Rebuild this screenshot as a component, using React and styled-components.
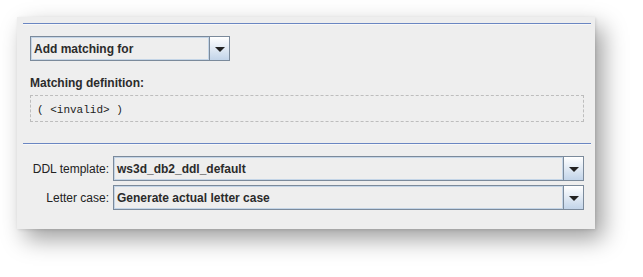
import React from "react";
import styled, { createGlobalStyle } from "styled-components";

const Global = createGlobalStyle`
  html, body { margin: 0; padding: 0; background: #ffffff; }
  body { font-family: "Liberation Sans", Arial, sans-serif; }
`;

const Page = styled.div`
  width: 643px;
  height: 277px;
  padding: 17px 0 0 17px;
  box-sizing: border-box;
`;

const Panel = styled.div`
  width: 578px;
  height: 212px;
  box-sizing: border-box;
  background: #eeeeee;
  padding: 6px 4px 0 6px;
  box-shadow: 8px 10px 22px rgba(0, 0, 0, 0.38), 1px 1px 3px rgba(0, 0, 0, 0.1);
  display: flex;
  flex-direction: column;
`;

const Separator = styled.div`
  height: 1px;
  background: #6a86c2;
  border-bottom: 1px solid #f8f8f8;
`;

const Section = styled.div`
  padding: ${(p) => p.$pad};
  display: flex;
  flex-direction: column;
  gap: ${(p) => p.$gap || 0}px;
`;

const Combo = styled.div`
  display: flex;
  width: ${(p) => (p.$width ? `${p.$width}px` : "auto")};
  flex: ${(p) => (p.$width ? "none" : "1")};
  height: 25px;
  box-sizing: border-box;
  border: 1px solid #7b8a9b;
  background: #eeeeee;
`;

const ComboField = styled.div`
  flex: 1;
  box-sizing: border-box;
  border: 1px solid #c4d5e7;
  padding: 0 0 0 2px;
  display: flex;
  align-items: center;
  font-size: 12px;
  font-weight: bold;
  color: #2b2b2b;
  white-space: nowrap;
`;

const ArrowButton = styled.div`
  width: 19px;
  flex: none;
  border-left: 1px solid #7b8a9b;
  background: linear-gradient(#ffffff, #c2d4e9);
  display: flex;
  align-items: center;
  justify-content: center;
`;

const Triangle = styled.div`
  width: 0;
  height: 0;
  border-left: 5px solid transparent;
  border-right: 5px solid transparent;
  border-top: 5px solid #222222;
  margin-top: 1px;
`;

const BoldLabel = styled.div`
  font-size: 12px;
  font-weight: bold;
  color: #2b2b2b;
  line-height: 14px;
`;

const DefBox = styled.div`
  height: 27px;
  box-sizing: border-box;
  border: 1px dashed #bdbdbd;
  display: flex;
  align-items: center;
  padding: 2px 0 0 6px;
  font-family: "Liberation Mono", "Courier New", monospace;
  font-size: 11px;
  color: #222222;
`;

const FormGrid = styled.div`
  display: grid;
  grid-template-columns: 79px 1fr;
  column-gap: 4px;
  row-gap: 4px;
  align-items: center;
`;

const FieldLabel = styled.div`
  font-size: 12px;
  color: #222222;
  text-align: right;
  white-space: nowrap;
`;

const ComboBox = ({ text, width }) => (
  <Combo $width={width}>
    <ComboField>{text}</ComboField>
    <ArrowButton>
      <Triangle />
    </ArrowButton>
  </Combo>
);

export default function App() {
  return (
    <>
      <Global />
      <Page>
        <Panel>
          <Separator />
          <Section $pad="11px 7px 0 7px">
            <ComboBox text="Add matching for" width={200} />
          </Section>
          <Section $pad="15px 7px 0 7px" $gap={5}>
            <BoldLabel>Matching definition:</BoldLabel>
            <DefBox>( &lt;invalid&gt; )</DefBox>
          </Section>
          <Section $pad="21px 0 0 0">
            <Separator />
          </Section>
          <Section $pad="11px 7px 0 7px">
            <FormGrid>
              <FieldLabel>DDL template:</FieldLabel>
              <ComboBox text="ws3d_db2_ddl_default" />
              <FieldLabel>Letter case:</FieldLabel>
              <ComboBox text="Generate actual letter case" />
            </FormGrid>
          </Section>
        </Panel>
      </Page>
    </>
  );
}
